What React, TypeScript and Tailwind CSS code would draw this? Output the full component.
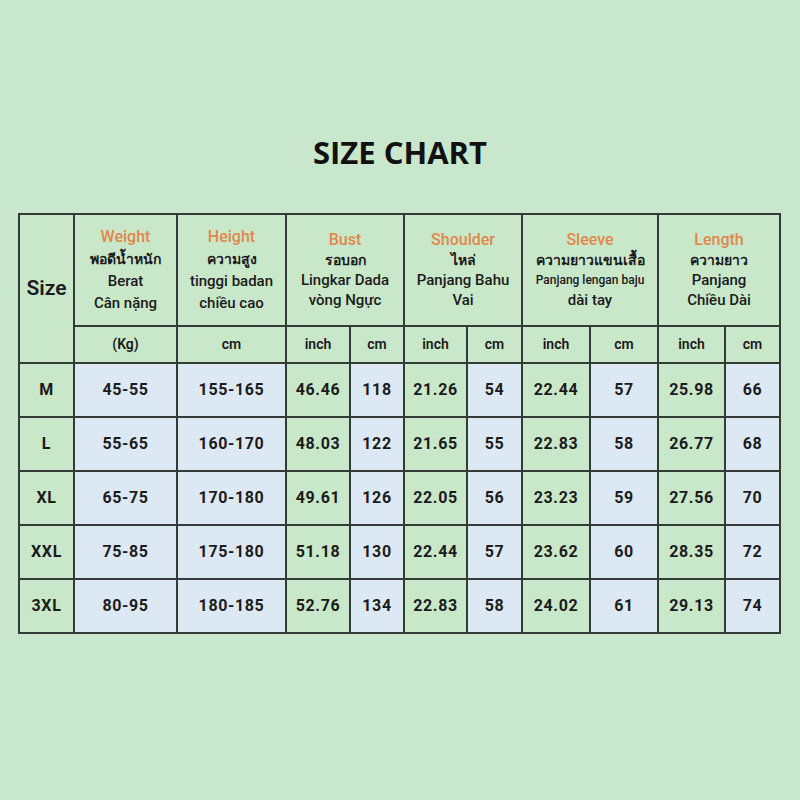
const green = 'bg-[#c9e7c9]';
const blue = 'bg-[#dce9f5]';

const heads = [
  { en: 'Weight', lines: ['พอดีน้ำหนัก', 'Berat', 'Cân nặng'], span: 1, leading: 'leading-[22px]' },
  { en: 'Height', lines: ['ความสูง', 'tinggi badan', 'chiều cao'], span: 1, leading: 'leading-[22px]' },
  { en: 'Bust', lines: ['รอบอก', 'Lingkar Dada', 'vòng Ngực'], span: 2, leading: 'leading-[20px]' },
  { en: 'Shoulder', lines: ['ไหล่', 'Panjang Bahu', 'Vai'], span: 2, leading: 'leading-[20px]' },
  { en: 'Sleeve', lines: ['ความยาวแขนเสื้อ', 'Panjang lengan baju', 'dài tay'], span: 2, leading: 'leading-[20px]' },
  { en: 'Length', lines: ['ความยาว', 'Panjang', 'Chiều Dài'], span: 2, leading: 'leading-[20px]' },
];

const units = ['(Kg)', 'cm', 'inch', 'cm', 'inch', 'cm', 'inch', 'cm', 'inch', 'cm'];

const rows = [
  ['M', '45-55', '155-165', '46.46', '118', '21.26', '54', '22.44', '57', '25.98', '66'],
  ['L', '55-65', '160-170', '48.03', '122', '21.65', '55', '22.83', '58', '26.77', '68'],
  ['XL', '65-75', '170-180', '49.61', '126', '22.05', '56', '23.23', '59', '27.56', '70'],
  ['XXL', '75-85', '175-180', '51.18', '130', '22.44', '57', '23.62', '60', '28.35', '72'],
  ['3XL', '80-95', '180-185', '52.76', '134', '22.83', '58', '24.02', '61', '29.13', '74'],
];

// green for size + inch columns, blue for the rest
const cellBg = [green, blue, blue, green, blue, green, blue, green, blue, green, blue];
const widths = [55, 103, 109, 64, 54, 63, 55, 68, 68, 67, 55];

const cell = 'border-2 border-[#333b37] text-center align-middle';

export default function App() {
  return (
    <div className="w-[800px] h-[800px] bg-[#c8e7cc] flex flex-col text-[#1b1b1b] font-['Roboto','Noto_Sans',sans-serif]">
      <h1 className="mt-[133px] text-center text-[31px] leading-[38px] font-bold font-['Open_Sans',sans-serif] text-[#111]">
        SIZE CHART
      </h1>

      <table className="mt-[42px] ml-[18px] w-[761px] table-fixed border-collapse">
        <colgroup>
          {widths.map((w, i) => (
            <col key={i} style={{ width: w }} />
          ))}
        </colgroup>
        <thead>
          <tr className="h-[112px]">
            <th rowSpan={2} className={`${cell} ${green} text-[21px] font-semibold`}>
              Size
            </th>
            {heads.map((h) => (
              <th key={h.en} colSpan={h.span} className={`${cell} ${green} ${h.leading} font-medium`}>
                <div className="text-[16px] text-[#e0874a]">{h.en}</div>
                <div className="text-[14px] font-bold">{h.lines[0]}</div>
                <div className={h.en === 'Sleeve' ? 'text-[12px]' : 'text-[15px]'}>{h.lines[1]}</div>
                <div className="text-[15px]">{h.lines[2]}</div>
              </th>
            ))}
          </tr>
          <tr className="h-[37px]">
            {units.map((u, i) => (
              <th key={i} className={`${cell} ${green} text-[14px] font-semibold`}>
                {u}
              </th>
            ))}
          </tr>
        </thead>
        <tbody>
          {rows.map((r) => (
            <tr key={r[0]} className="h-[54px]">
              {r.map((v, i) => (
                <td key={i} className={`${cell} ${cellBg[i]} text-[16px] font-bold tracking-[0.04em]`}>
                  {v}
                </td>
              ))}
            </tr>
          ))}
        </tbody>
      </table>
    </div>
  );
}
